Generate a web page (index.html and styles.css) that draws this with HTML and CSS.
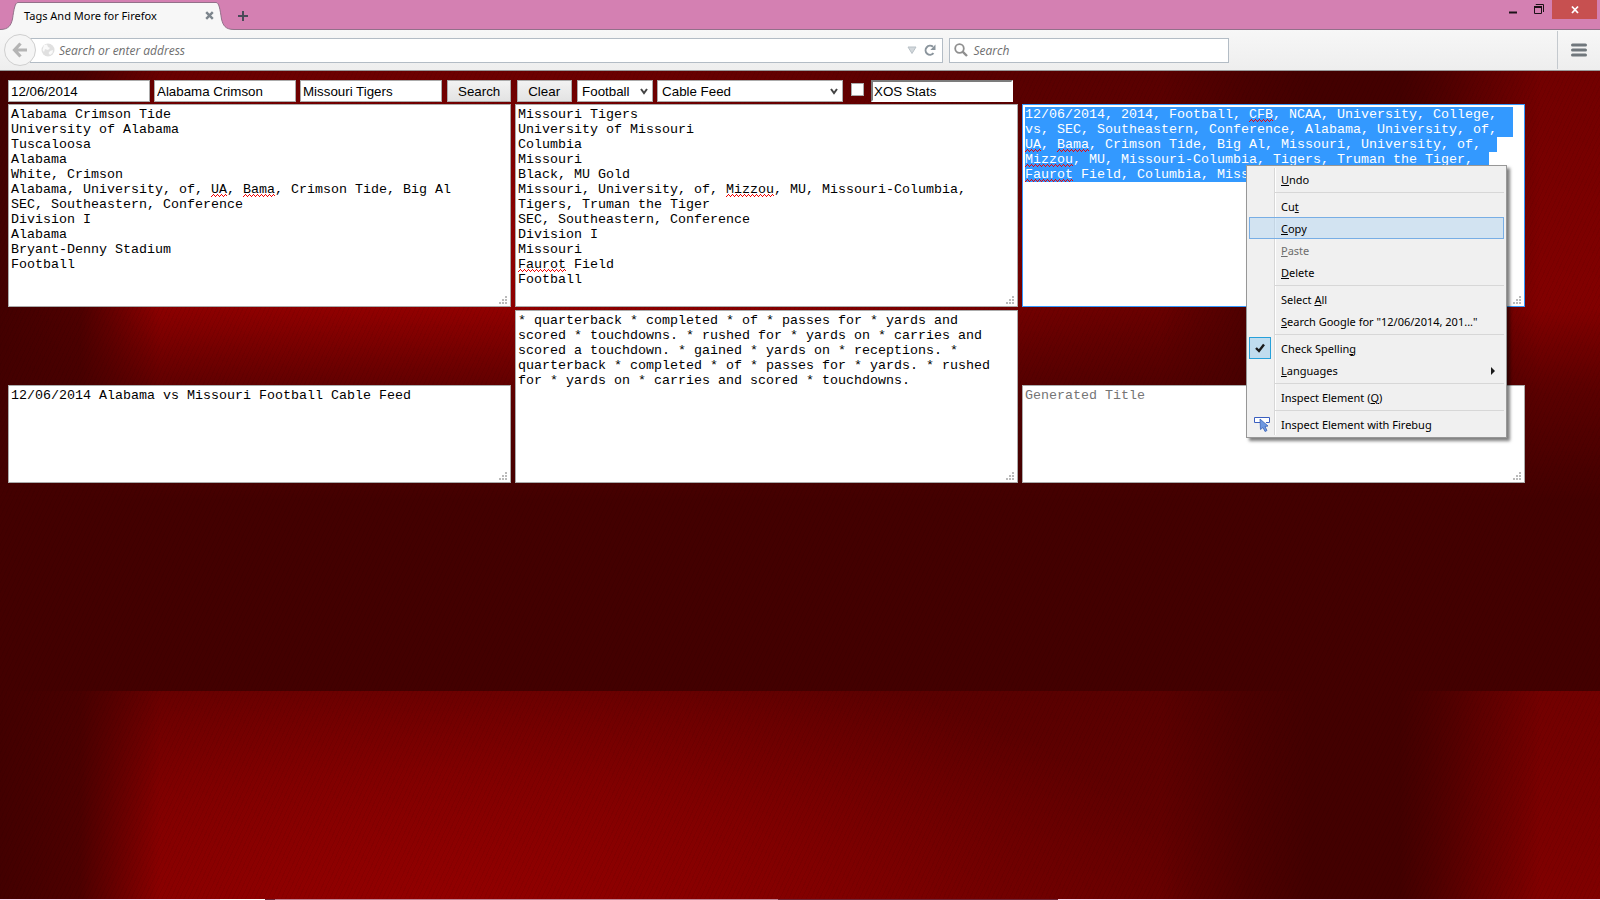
FILE: index.html
```html
<!DOCTYPE html>
<html lang="en">
<head>
<meta charset="utf-8">
<title>Tags And More for Firefox</title>
<link rel="stylesheet" href="styles.css">
</head>
<body>
<header class="titlebar">
  <div class="tab">
    <svg class="tab-edge" width="18" height="30" viewBox="0 0 18 30"><path class="tab-fill" d="M0 30V29.500C9 29.500 11 25 12.500 19C14 9 15 2.500 18 2.500V30Z"/><path class="tab-line" d="M0 29.500C9 29.500 11 25 12.500 19C14 9 15 2.500 18 2.500"/></svg>
    <div class="tab-body">
      <span class="tab-title">Tags And More for Firefox</span>
      <button class="tab-close" aria-label="Close tab"><svg width="9" height="9" viewBox="0 0 9 9"><path d="M1.200 1.200L7.800 7.800M7.800 1.200L1.200 7.800" stroke="#7c858c" stroke-width="2.400"/></svg></button>
    </div>
    <svg class="tab-edge flip" width="18" height="30" viewBox="0 0 18 30"><path class="tab-fill" d="M0 30V29.500C9 29.500 11 25 12.500 19C14 9 15 2.500 18 2.500V30Z"/><path class="tab-line" d="M0 29.500C9 29.500 11 25 12.500 19C14 9 15 2.500 18 2.500"/></svg>
  </div>
  <button class="new-tab" aria-label="New tab"><svg width="10" height="10" viewBox="0 0 10 10"><path d="M5 0V10M0 5H10" stroke="#4a4a58" stroke-width="2"/></svg></button>
  <div class="window-controls">
    <button aria-label="Minimize"><svg width="10" height="20" viewBox="0 0 10 20"><path d="M1 12.500H9" stroke="#1c1218" stroke-width="2"/></svg></button>
    <button aria-label="Restore"><svg width="12" height="20" viewBox="0 0 12 20"><path d="M3 5V4.500H10.500V12" fill="none" stroke="#1c1218"/><path d="M1.500 7H8.500V13.500H1.500Z" fill="none" stroke="#1c1218"/><path d="M1 7H9" stroke="#1c1218" stroke-width="2"/></svg></button>
    <button class="close" aria-label="Close"><svg width="8" height="20" viewBox="0 0 8 20"><path d="M1 6.500L7 13M7 6.500L1 13" stroke="#fff" stroke-width="1.800"/></svg></button>
  </div>
</header>
<nav class="toolbar">
  <button class="back" aria-label="Back"><svg width="16" height="16" viewBox="0 0 16 16"><path d="M8.500 1.500L2.500 8L8.500 14.500M3 8H15" fill="none" stroke="#b4b4b4" stroke-width="3.200"/></svg></button>
  <div class="field address">
    <svg width="14" height="14" viewBox="0 0 14 14"><circle cx="7" cy="7" r="6.500" fill="#e0e0e0"/><path d="M3 2L6 1.500L7 4L9 5L7 7L4 6L3 9L1.500 7ZM9 8L12 7L11.500 10L9 12L7.500 10Z" fill="#fafafa"/></svg>
    <input type="text" aria-label="Address" placeholder="Search or enter address">
    <svg width="10" height="8" viewBox="0 0 10 8"><path d="M1 1H9L5 7.500Z" fill="#d3d8dc" stroke="#b8c0c6"/></svg>
    <svg class="reload" width="12" height="12" viewBox="0 0 12 12"><path d="M9.500 9.200A4.500 4.500 0 1 1 9 2.800" fill="none" stroke="#8a949c" stroke-width="2"/><path d="M11.500 .5V6H6.300Z" fill="#8a949c"/></svg>
  </div>
  <div class="field search">
    <svg width="14" height="14" viewBox="0 0 14 14"><circle cx="5.500" cy="5.500" r="4.300" fill="none" stroke="#8f8f8f" stroke-width="1.800"/><path d="M8.600 8.600L13 13" stroke="#8f8f8f" stroke-width="2.400"/></svg>
    <input type="text" aria-label="Search the web" placeholder="Search">
  </div>
  <button class="app-menu" aria-label="Open menu"><svg width="16" height="14" viewBox="0 0 16 14"><path d="M1.500 2H14.500M1.500 7H14.500M1.500 12H14.500" stroke="#70777c" stroke-width="3" stroke-linecap="round"/></svg></button>
</nav>
<main class="page">
  <form class="controls" onsubmit="return false">
    <input class="box" type="text" aria-label="Date" value="12/06/2014">
    <input class="box" type="text" aria-label="Home team" value="Alabama Crimson">
    <input class="box" type="text" aria-label="Away team" value="Missouri Tigers">
    <button class="btn" type="submit">Search</button>
    <button class="btn" type="reset">Clear</button>
    <select class="pick sport" aria-label="Sport"><option>Football</option></select>
    <select class="pick feed" aria-label="Feed"><option>Cable Feed</option></select>
    <input class="tick" type="checkbox" aria-label="Include XOS Stats">
    <input class="box stats" type="text" aria-label="Stats" value="XOS Stats">
  </form>
  <div class="areas">
    <div class="area tall">
      <textarea aria-label="Home team details" spellcheck="false">Alabama Crimson Tide
University of Alabama
Tuscaloosa
Alabama
White, Crimson
Alabama, University, of, UA, Bama, Crimson Tide, Big Al
SEC, Southeastern, Conference
Division I
Alabama
Bryant-Denny Stadium
Football</textarea>
      <i class="typo" style="--row:5;--col:25;--len:2"></i>
      <i class="typo" style="--row:5;--col:29;--len:4"></i>
      <svg class="grip" width="8" height="8" viewBox="0 0 8 8"><path d="M6 0h2v2h-2zM3 3h2v2h-2zM6 3h2v2h-2zM0 6h2v2h-2zM3 6h2v2h-2zM6 6h2v2h-2z"/></svg>
    </div>
    <div class="area tall">
      <textarea aria-label="Away team details" spellcheck="false">Missouri Tigers
University of Missouri
Columbia
Missouri
Black, MU Gold
Missouri, University, of, Mizzou, MU, Missouri-Columbia, Tigers, Truman the Tiger
SEC, Southeastern, Conference
Division I
Missouri
Faurot Field
Football</textarea>
      <i class="typo" style="--row:5;--col:26;--len:6"></i>
      <i class="typo" style="--row:10;--col:0;--len:6"></i>
      <svg class="grip" width="8" height="8" viewBox="0 0 8 8"><path d="M6 0h2v2h-2zM3 3h2v2h-2zM6 3h2v2h-2zM0 6h2v2h-2zM3 6h2v2h-2zM6 6h2v2h-2z"/></svg>
    </div>
    <div class="area tall">
      <textarea id="tags" class="tags" aria-label="Generated tags" spellcheck="false">12/06/2014, 2014, Football, CFB, NCAA, University, College, vs, SEC, Southeastern, Conference, Alabama, University, of, UA, Bama, Crimson Tide, Big Al, Missouri, University, of, Mizzou, MU, Missouri-Columbia, Tigers, Truman the Tiger, Faurot Field, Columbia, Missouri</textarea>
      <i class="typo" style="--row:0;--col:28;--len:3"></i>
      <i class="typo" style="--row:2;--col:0;--len:2"></i>
      <i class="typo" style="--row:2;--col:4;--len:4"></i>
      <i class="typo" style="--row:3;--col:0;--len:6"></i>
      <i class="typo" style="--row:4;--col:0;--len:6"></i>
      <svg class="grip" width="8" height="8" viewBox="0 0 8 8"><path d="M6 0h2v2h-2zM3 3h2v2h-2zM6 3h2v2h-2zM0 6h2v2h-2zM3 6h2v2h-2zM6 6h2v2h-2z"/></svg>
    </div>
    <div class="area short">
      <textarea aria-label="Title" spellcheck="false">12/06/2014 Alabama vs Missouri Football Cable Feed</textarea>
      <svg class="grip" width="8" height="8" viewBox="0 0 8 8"><path d="M6 0h2v2h-2zM3 3h2v2h-2zM6 3h2v2h-2zM0 6h2v2h-2zM3 6h2v2h-2zM6 6h2v2h-2z"/></svg>
    </div>
    <div class="area medium">
      <textarea aria-label="Stats template" spellcheck="false">* quarterback * completed * of * passes for * yards and scored * touchdowns. * rushed for * yards on * carries and scored a touchdown. * gained * yards on * receptions. * quarterback * completed * of * passes for * yards. * rushed for * yards on * carries and scored * touchdowns.</textarea>
      <svg class="grip" width="8" height="8" viewBox="0 0 8 8"><path d="M6 0h2v2h-2zM3 3h2v2h-2zM6 3h2v2h-2zM0 6h2v2h-2zM3 6h2v2h-2zM6 6h2v2h-2z"/></svg>
    </div>
    <div class="area short">
      <textarea aria-label="Generated title" placeholder="Generated Title"></textarea>
      <svg class="grip" width="8" height="8" viewBox="0 0 8 8"><path d="M6 0h2v2h-2zM3 3h2v2h-2zM6 3h2v2h-2zM0 6h2v2h-2zM3 6h2v2h-2zM6 6h2v2h-2z"/></svg>
    </div>
  </div>
</main>
<div class="menu" role="menu">
  <button role="menuitem"><u>U</u>ndo</button>
  <hr>
  <button role="menuitem">Cu<u>t</u></button>
  <button role="menuitem" class="active"><u>C</u>opy</button>
  <button role="menuitem" disabled><u>P</u>aste</button>
  <button role="menuitem"><u>D</u>elete</button>
  <hr>
  <button role="menuitem">Select <u>A</u>ll</button>
  <button role="menuitem"><u>S</u>earch Google for "12/06/2014, 201..."</button>
  <hr>
  <button role="menuitemcheckbox" aria-checked="true"><span class="mark checked"><svg width="10" height="10" viewBox="0 0 10 10"><path d="M1 5L4 8L9 1.500" fill="none" stroke="#1a1a1a" stroke-width="2.400"/></svg></span>Check Spellin<u>g</u></button>
  <button role="menuitem"><u>L</u>anguages<svg class="more" width="4" height="8" viewBox="0 0 4 8"><path d="M0 0L4 4L0 8Z" fill="#1a1a1a"/></svg></button>
  <hr>
  <button role="menuitem">Inspect Element (<u>Q</u>)</button>
  <hr>
  <button role="menuitem"><span class="mark"><svg width="16" height="16" viewBox="0 0 16 16"><path d="M6 6.500H.5V1.500H15.500V6.500H12" fill="#fff" stroke="#3a5fc0"/><path d="M6 3L14 10L11 10.500L13 14.500L11 15.500L9 11.500L6.500 13.500Z" fill="#6d97e0" stroke="#3a62b8" stroke-width=".8"/></svg></span>Inspect Element with Firebug</button>
</div>
<footer class="desktop-edge"></footer>
<script src="main.js"></script>
</body>
</html>
```
FILE: styles.css
```css
* { box-sizing: border-box; }
body {
  margin: 0;
  min-height: 100vh;
  display: flex;
  flex-direction: column;
  font-family: "Open Sans", "Noto Sans", sans-serif;
  font-size: 12px;
  color: #000;
}
button, input, select { font-family: inherit; }

.titlebar { display: flex; align-items: flex-start; height: 30px; background: #d480b2; box-shadow: inset 0 -1px #93708a; }
.tab { display: flex; height: 30px; }
.tab-edge { display: block; }
.flip { transform: scaleX(-1); }
.tab-fill { fill: #f7f7f7; }
.tab-line { fill: none; stroke: #93708a; }
.tab-body { display: flex; align-items: center; justify-content: space-between; width: 198px; height: 28px; margin-top: 2px; padding: 0 2px 2px 6px; background: #f7f7f7; border-top: 1px solid #93708a; }
.tab-title { font-family: "Noto Sans", sans-serif; font-size: 11px; line-height: 16px; white-space: nowrap; }
.tab-close, .new-tab, .window-controls button, .app-menu { display: flex; align-items: center; justify-content: center; padding: 0; border: 0; background: none; }
.new-tab { width: 18px; height: 32px; }
.window-controls { display: flex; margin-left: auto; padding-right: 3px; }
.window-controls button { width: 26px; height: 19px; }
.window-controls .close { width: 45px; background: #c75050; }

.toolbar { display: flex; align-items: center; height: 41px; padding-left: 4px; background: linear-gradient(#f7f7f7, #eee); border-bottom: 1px solid #9a9a9a; }
.back { z-index: 1; display: flex; align-items: center; justify-content: center; width: 32px; height: 32px; padding: 0; border: 1px solid #cfcfcf; border-radius: 50%; background: #f5f5f5; }
.field { display: flex; align-items: center; height: 25px; background: #fff; border: 1px solid #b3bcc5; }
.field input { flex: 1; min-width: 0; border: 0; padding: 0; background: none; font-size: 12px; font-style: italic; outline: 0; }
.field input::placeholder { color: #6e6e6e; }
.address { flex: 917; margin-left: -6px; padding: 0 6px 0 10px; gap: 4px; }
.reload { margin-left: 3px; }
.search { flex: 276; margin: 0 328px 0 6px; padding: 0 4px; gap: 5px; }
.app-menu { width: 43px; height: 38px; flex: none; border-left: 1px solid #c4c9ce; }

.page {
  flex: 1;
  padding: 9px 8px;
  background-color: #430000;
  background-image:
    repeating-linear-gradient(115deg, rgba(0,0,0,.05) 0 1px, transparent 1px 4px),
    linear-gradient(transparent 240px, rgba(67,0,0,.6) 320px, #430000 430px),
    linear-gradient(90deg, #430000 0, rgba(67,0,0,.85) 80px, rgba(67,0,0,0) 160px, rgba(67,0,0,0) 1160px, rgba(67,0,0,.7) 1250px, #430000 1310px, #430000 1400px, rgba(67,0,0,.3) 1480px, rgba(67,0,0,0) 1540px),
    radial-gradient(ellipse 760px 270px at 430px 215px, #920000, rgba(146,0,0,.55) 50%, transparent),
    linear-gradient(90deg, rgba(92,0,0,0) 600px, rgba(80,0,0,.45) 1000px 1400px, rgba(140,0,0,.4) 1540px),
    linear-gradient(#600000, #7a0000 220px, #700000 400px);
  background-size: auto, 100% 620px, 100% 620px, 100% 620px, 100% 620px, 100% 620px;
}
.controls { display: flex; height: 22px; margin-bottom: 2px; }
.box { width: 142px; height: 22px; margin-right: 4px; padding: 0 2px; border: 1px solid #ababab; background: #fff; }
.box, .btn, .pick { font-family: "Liberation Sans", Arial, sans-serif; color: #000; }
.btn { height: 22px; margin: 0 5px 0 1px; padding: 0 10px; border: 1px solid #ababab; background: linear-gradient(#f2f2f2, #e3e3e3); }
.btn + .btn { padding: 0 11px 0 10px; }
.pick { height: 22px; margin-right: 4px; padding: 0 4px; border: 1px solid #ababab; border-radius: 0; appearance: none; background: #fff url("data:image/svg+xml,%3Csvg xmlns='http://www.w3.org/2000/svg' width='8' height='7'%3E%3Cpath d='M1 1L4 5L7 1' fill='none' stroke='%23444' stroke-width='2'/%3E%3C/svg%3E") no-repeat right 4px center; }
.sport { width: 76px; }
.feed { width: 186px; }
.tick { appearance: none; width: 13px; height: 13px; margin: 3px 7px 0 4px; border: 1px solid #ababab; background: #fff; }
.stats { border: 2px solid #fff; border-top-color: #7c7c7c; border-left-color: #7c7c7c; padding: 0 1px; }

.areas { display: grid; grid-template-columns: repeat(3, minmax(0, 503px)); gap: 3px 4px; align-items: end; }
.area { position: relative; display: flex; font-family: "Liberation Mono", "Courier New", monospace; }
.area textarea { width: 100%; height: 100%; margin: 0; padding: 2px 4px 2px 2px; border: 1px solid #ababab; background: #fff; color: #000; font-family: inherit; line-height: 15px; overflow: hidden; resize: none; outline: 0; }
.area textarea::placeholder { color: #757575; }
.grip { position: absolute; right: 4px; bottom: 3px; fill: #bbb; }
.tall { height: 203px; }
.short { height: 98px; }
.medium { height: 173px; }
.area .tags { border-color: #3399ff; }
.tags::selection { background: #3399ff; color: #fff; }
.typo { position: absolute; left: calc(3px + var(--col) * 8px); top: calc(15px + var(--row) * 15px); width: calc(var(--len) * 8px); height: 3px; background: url("data:image/svg+xml,%3Csvg xmlns='http://www.w3.org/2000/svg' width='4' height='3'%3E%3Cpath d='M0 2h1v1h-1zM1 1h1v1h-1zM2 0h1v1h-1zM3 1h1v1h-1z' fill='%23f00000'/%3E%3C/svg%3E") repeat-x; pointer-events: none; }

.menu { position: absolute; left: 1246px; top: 165px; width: 261px; padding: 2px; border: 1px solid #979797; background: linear-gradient(90deg, transparent 27px, #d7d7d7 27px 28px, #fff 28px 29px, transparent 29px) 0 2px / 100% calc(100% - 4px) no-repeat #f0f0f0; box-shadow: 3px 3px 3px rgba(0,0,0,.5); }
.menu button { position: relative; display: flex; align-items: center; width: 100%; height: 22px; padding: 1px 0 0 31px; border: 1px solid transparent; background: none; color: #000; font-family: "Noto Sans", sans-serif; font-size: 11px; line-height: 16px; text-align: left; white-space: pre; }
.menu button:disabled { color: #6d6d6d; }
.menu .active { border-color: #78aee5; background: rgba(174,210,242,.45); }
.menu hr { height: 1px; margin: 2px 0 2px 26px; border: 0; background: #d7d7d7; }
.mark { position: absolute; left: -1px; top: -1px; display: flex; align-items: center; justify-content: center; width: 22px; height: 22px; }
.mark:not(.checked) { left: 1px; }
.checked { border: 1px solid #26a0da; background: #c0dcee; }
.more { margin-left: auto; margin-right: 8px; }

.desktop-edge { height: 1px; background: linear-gradient(90deg, #f8d4ea 0 220px, #fff 220px 265px, #702838 265px 275px, #c08090 275px 778px, #702838 778px 1058px, #f8d4ea 1058px); }
```
FILE: main.js
```js
const tags = document.getElementById("tags");
tags.focus();
tags.select();
```
